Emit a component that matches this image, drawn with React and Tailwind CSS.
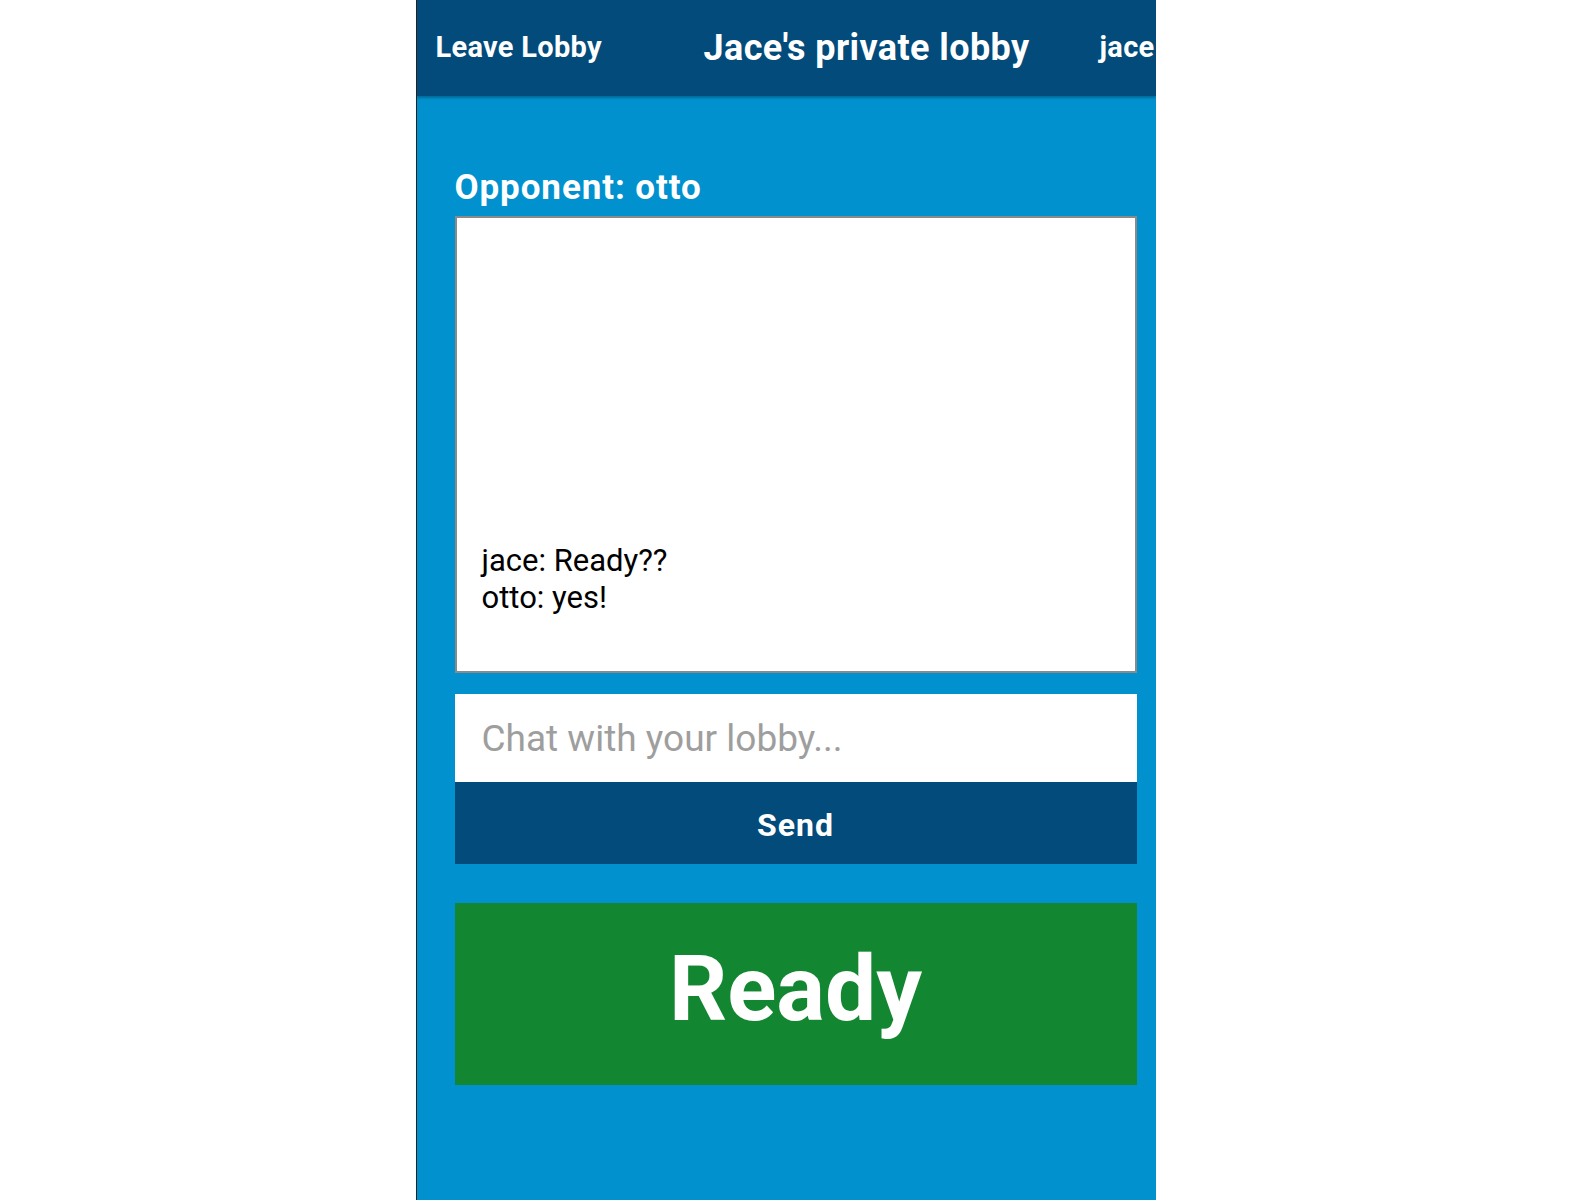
import React from "react";

const messages = [
  { user: "jace", text: "Ready??" },
  { user: "otto", text: "yes!" },
];

const App = () => {
  return (
    <div className="w-full h-[1200px] bg-white flex justify-center" style={{ fontFamily: "Roboto, 'Liberation Sans', sans-serif" }}>
      <div className="w-[740px] h-full bg-[#0191ce] border-l border-[#222] flex flex-col overflow-hidden">
        <div className="h-[96px] bg-[#024b7a] shadow-[0_2px_2px_rgba(0,0,0,0.25)] flex items-center whitespace-nowrap text-white font-bold shrink-0">
          <span className="ml-[19px] w-[165px] text-[29px] tracking-[0.3px]">Leave Lobby</span>
          <span className="ml-[103px] w-[329px] text-[36px] tracking-[0.4px]">Jace's private lobby</span>
          <span className="ml-[67px] text-[29px] tracking-[0.3px]">jace</span>
        </div>

        <div className="pl-[38px] pr-[19px] flex flex-col">
          <h2 className="mt-[72px] text-white font-bold text-[35px] tracking-[0.9px] leading-[40px]">Opponent: otto</h2>
          <div className="mt-[8px] h-[457px] bg-white border-2 border-[#8a8a8a] flex flex-col justify-end pl-[25px] pb-[55px]">
            {messages.map((m, i) => (
              <div key={i} className="text-black text-[31px] leading-[37px]">
                {m.user}: {m.text}
              </div>
            ))}
          </div>
          <input
            className="mt-[21px] h-[88px] bg-white px-[27px] text-[37px] text-black placeholder-[#9e9e9e] outline-none"
            placeholder="Chat with your lobby..."
          />
          <button className="h-[82px] bg-[#024b7a] text-white font-bold text-[32px] tracking-[1px] pt-[3px]">Send</button>
          <button className="mt-[39px] h-[182px] bg-[#138631] text-white font-bold text-[91px] pb-[10px]">Ready</button>
        </div>
      </div>
    </div>
  );
};

export default App;
